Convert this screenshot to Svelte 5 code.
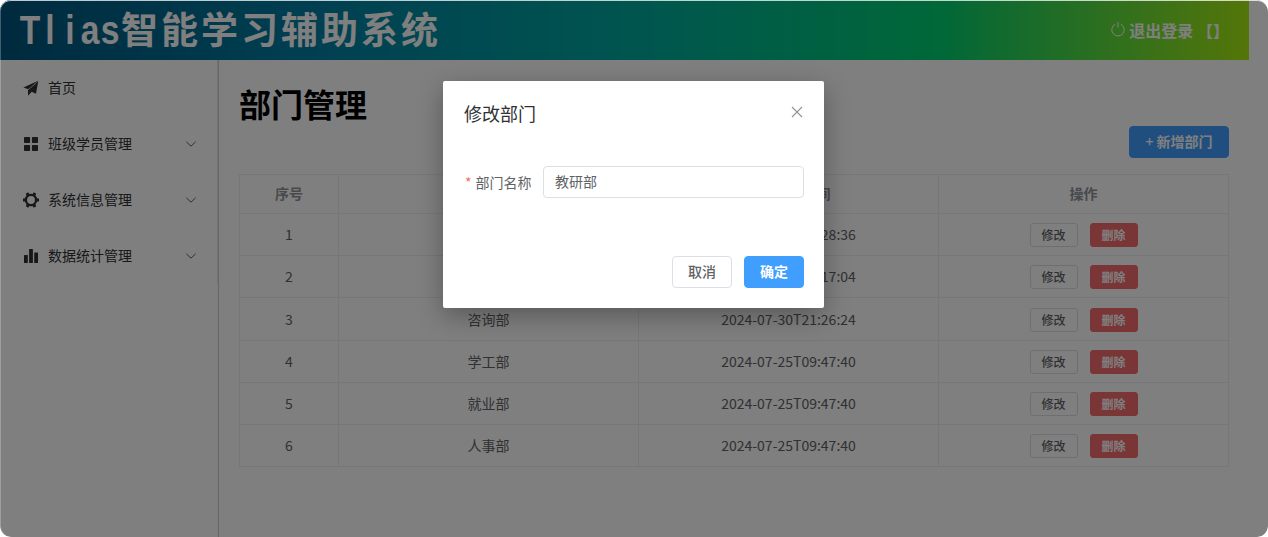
<script>
  const latin = ['T', 'l', 'i', 'a', 's'];
  const menu = [
    { icon: 'send', label: '首页', open: false },
    { icon: 'grid', label: '班级学员管理', open: true },
    { icon: 'gear', label: '系统信息管理', open: true },
    { icon: 'bars', label: '数据统计管理', open: true }
  ];
  const rows = [
    { name: '教研部', time: '2024-09-14T17:28:36' },
    { name: '教务部', time: '2024-09-14T17:17:04' },
    { name: '咨询部', time: '2024-07-30T21:26:24' },
    { name: '学工部', time: '2024-07-25T09:47:40' },
    { name: '就业部', time: '2024-07-25T09:47:40' },
    { name: '人事部', time: '2024-07-25T09:47:40' }
  ];
  const teeth = [30, 90, 150, 210, 270, 330];
  let dept = $state('教研部');
</script>

<div class="window">
  <header>
    <div class="brand">
      {#each latin as ch}<span class="latin">{ch}</span>{/each}<span class="kai">智能学习辅助系统</span>
    </div>
    <div class="logout">
      <svg width="14" height="16" viewBox="0 0 14 16" fill="none" stroke="#fff" stroke-width="1">
        <path d="M4.3 3.2A6.2 6.2 0 1 0 9.7 3.2M7 1v5.6" />
      </svg>
      <span>退出登录 【】</span>
    </div>
  </header>
  <div class="body">
    <aside>
      <nav>
        {#each menu as m}
          <div class="item">
            <svg class="ico" width="16" height="16" viewBox="0 0 16 16" fill="#303133">
              {#if m.icon === 'send'}
                <path d="M.4 7.6 15.3.7 5.3 9.2z" />
                <path d="M15.3.7 13 13.8 8.7 11.7 5.1 15.7 4.9 10.2 11.8 4.5 6.3 10.4z" />
              {:else if m.icon === 'grid'}
                <rect x="1" y="1" width="6.1" height="6.1" rx=".8" />
                <rect x="8.9" y="1" width="6.1" height="6.1" rx=".8" />
                <rect x="1" y="8.9" width="6.1" height="6.1" rx=".8" />
                <rect x="8.9" y="8.9" width="6.1" height="6.1" rx=".8" />
              {:else if m.icon === 'gear'}
                <circle cx="8" cy="8" r="5.1" fill="none" stroke="#303133" stroke-width="2.4" />
                {#each teeth as t}
                  <path d="M6.5 2.8V0h3v2.8z" transform="rotate({t} 8 8)" />
                {/each}
              {:else}
                <rect x="1" y="7" width="3.8" height="8" rx=".5" />
                <rect x="6.1" y="1" width="3.8" height="14" rx=".5" />
                <rect x="11.2" y="4.5" width="3.8" height="10.5" rx=".5" />
              {/if}
            </svg>
            <span>{m.label}</span>
            {#if m.open}
              <svg class="chev" width="12" height="12" viewBox="0 0 12 12" fill="none" stroke="#606266" stroke-width="1">
                <path d="M1.3 3.7 6 8.2l4.7-4.5" />
              </svg>
            {/if}
          </div>
        {/each}
      </nav>
    </aside>
    <main>
      <h1>部门管理</h1>
      <div class="toolbar"><button class="btn primary add"><span class="plus">+</span> 新增部门</button></div>
      <div class="table">
        <div class="row head">
          <div>序号</div><div>部门名称</div><div>最后操作时间</div><div>操作</div>
        </div>
        {#each rows as r, i}
          <div class="row" class:tall={i === 2}>
            <div>{i + 1}</div>
            <div>{r.name}</div>
            <div>{r.time}</div>
            <div class="ops">
              <button class="btn mini">修改</button>
              <button class="btn mini danger">删除</button>
            </div>
          </div>
        {/each}
      </div>
    </main>
  </div>
  <div class="mask">
    <section class="dialog">
      <div class="dhead">
        <span>修改部门</span>
        <svg width="12" height="12" viewBox="0 0 12 12" fill="none" stroke="#909399" stroke-width="1.1">
          <path d="M1 1l10 10M11 1 1 11" />
        </svg>
      </div>
      <div class="field">
        <label for="dept"><i>*</i>部门名称</label>
        <input id="dept" bind:value={dept} />
      </div>
      <div class="dfoot">
        <button class="btn">取消</button>
        <button class="btn primary">确定</button>
      </div>
    </section>
  </div>
</div>

<style>
  :global(body) {
    background: #fff;
    overflow: hidden;
  }
  * {
    box-sizing: border-box;
  }
  .window {
    position: relative;
    width: 1268px;
    height: 537px;
    border-radius: 11px;
    overflow: hidden;
    background: #fff;
    font-family: 'Noto Sans CJK SC', sans-serif;
    font-size: 14px;
    line-height: 20px;
    color: #606266;
  }
  header {
    width: 1249px;
    height: 60px;
    padding: 0 20px;
    display: flex;
    align-items: center;
    justify-content: space-between;
    background: linear-gradient(to right, #00547d, #007fa4, #00aaa0, #00d072, #a8eb12);
    color: #fff;
  }
  .brand {
    display: flex;
    font-size: 40px;
    font-weight: 700;
    line-height: 60px;
  }
  .latin {
    width: 20px;
    display: flex;
    justify-content: center;
    font-family: 'Liberation Sans', sans-serif;
    transform: scaleX(0.84);
  }
  .kai {
    padding-left: 1px;
    font-family: KaiTi, STKaiti, 'Noto Sans CJK SC', sans-serif;
    font-size: 37px;
    letter-spacing: 3px;
    line-height: 56px;
  }
  .logout {
    display: flex;
    align-items: center;
    gap: 4px;
    font-size: 16px;
    font-weight: 700;
    line-height: 24px;
    white-space: pre;
  }
  .logout svg {
    margin-top: -3px;
  }
  .body {
    display: flex;
    height: 477px;
  }
  aside {
    width: 219px;
    border-right: 1px solid #ccc;
  }
  nav {
    height: 224px;
    border-right: 1px solid #e6e6e6;
  }
  .item {
    height: 56px;
    padding: 0 20px 0 23px;
    display: flex;
    align-items: center;
    color: #303133;
  }
  .item span {
    margin-left: 9px;
    padding-bottom: 2px;
  }
  .chev {
    margin-left: auto;
  }
  main {
    width: 1010px;
    padding: 20px 0 0 20px;
  }
  h1 {
    margin: 0;
    height: 46px;
    font-size: 32px;
    line-height: 46px;
    color: #000;
  }
  .toolbar {
    display: flex;
    justify-content: flex-end;
    height: 48px;
  }
  .btn {
    width: 60px;
    height: 32px;
    padding: 0 0 2px;
    border: 1px solid #dcdfe6;
    border-radius: 4px;
    background: #fff;
    color: #606266;
    font: 500 14px/20px 'Noto Sans CJK SC', sans-serif;
  }
  .primary {
    background: #409eff;
    border-color: #409eff;
    color: #fff;
    font-weight: 700;
  }
  .add {
    width: 100px;
  }
  .plus {
    font-weight: 500;
  }
  .mini {
    width: 48px;
    height: 24px;
    padding: 0;
    border-radius: 3px;
    font-size: 12px;
    line-height: 16px;
  }
  .danger {
    background: #f56c6c;
    border-color: #f56c6c;
    color: #fff;
    font-weight: 700;
  }
  .table {
    width: 990px;
    border: 1px solid #ebeef5;
    border-bottom: 0;
  }
  .row {
    display: grid;
    grid-template-columns: 99px 300px 300px 289px;
    height: 42px;
    border-bottom: 1px solid #ebeef5;
  }
  .row.tall {
    height: 43px;
  }
  .row.head {
    height: 39px;
    font-weight: 700;
    color: #909399;
  }
  .row > div {
    display: flex;
    align-items: center;
    justify-content: center;
    padding-bottom: 2px;
    border-right: 1px solid #ebeef5;
  }
  .row.tall > div {
    padding-bottom: 0;
  }
  .row > div:last-child {
    border-right: 0;
  }
  .row > .ops {
    gap: 12px;
    padding-bottom: 0;
  }
  .row.tall > .ops {
    padding-top: 1px;
  }
  .mask {
    position: absolute;
    inset: 0;
    padding-top: 81px;
    background: rgba(0, 0, 0, 0.5);
    border-radius: 11px;
    box-shadow: inset 0 1px 0 rgba(255, 255, 255, 0.75), inset 1px 0 0 rgba(255, 255, 255, 0.25);
  }
  .dialog {
    width: 381px;
    height: 227px;
    margin-left: 443px;
    padding: 20px;
    border-radius: 2px;
    background: #fff;
    box-shadow: 0 8px 26px rgba(0, 0, 0, 0.3);
  }
  .dhead {
    display: flex;
    justify-content: space-between;
    height: 65px;
    padding-left: 1px;
    font-size: 18px;
    line-height: 24px;
    color: #303133;
  }
  .dhead svg {
    margin: 5px 1px 0 0;
  }
  .field {
    display: flex;
    justify-content: space-between;
    height: 90px;
  }
  label {
    padding-left: 2px;
    line-height: 32px;
  }
  label i {
    margin-right: 4px;
    font-style: normal;
    color: #f56c6c;
  }
  input {
    width: 261px;
    height: 32px;
    padding: 0 11px 2px;
    border: 1px solid #dcdfe6;
    border-radius: 4px;
    outline: 0;
    color: #606266;
    font: 14px/20px 'Noto Sans CJK SC', sans-serif;
  }
  .dfoot {
    display: flex;
    justify-content: flex-end;
    gap: 12px;
  }
</style>
